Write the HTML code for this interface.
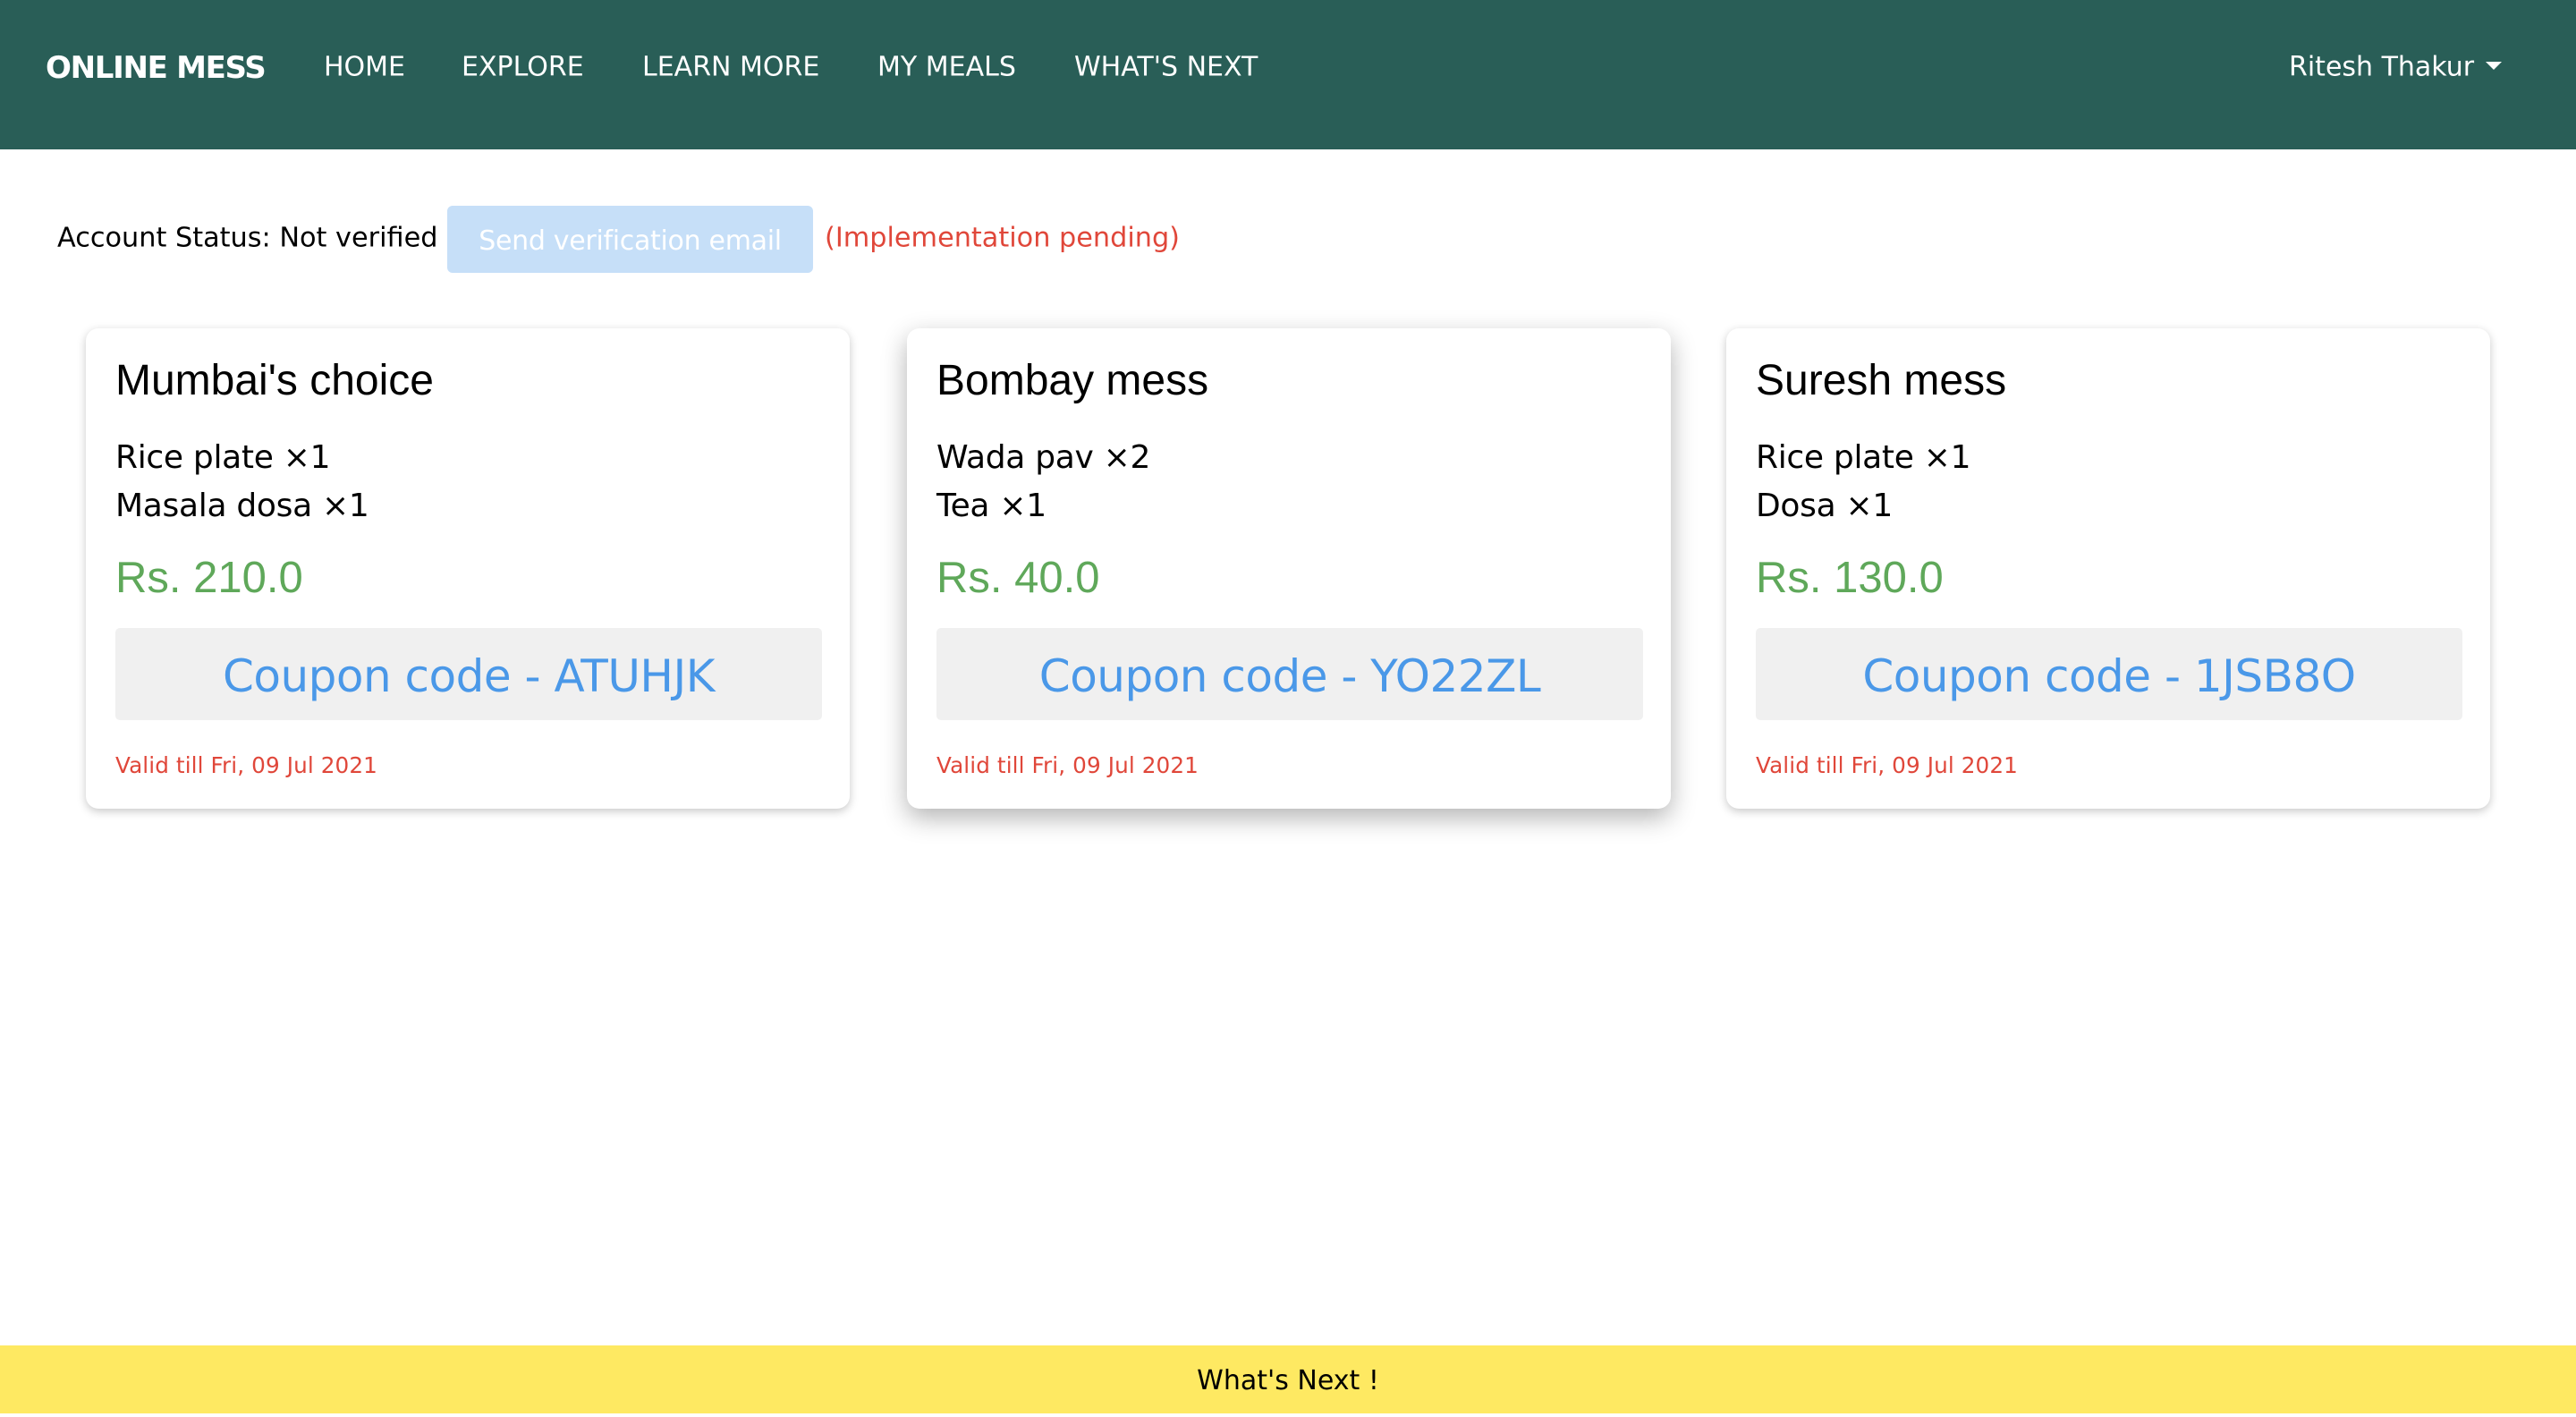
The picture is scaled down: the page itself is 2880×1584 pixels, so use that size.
<!DOCTYPE html>
<html><head><meta charset="utf-8"><style>
*{margin:0;padding:0;box-sizing:border-box}
body{width:2880px;height:1580px;position:relative;background:#fff;font-family:"DejaVu Sans",Verdana,sans-serif;overflow:hidden}
.nav{position:absolute;left:0;top:0;width:2880px;height:167px;background:#295e57;color:#fff}
.nav span{position:absolute;top:75px;transform:translateY(-50%);font-size:30px;white-space:nowrap;letter-spacing:0}
.brand{font-weight:bold;font-size:34px!important;letter-spacing:-1.3px!important;top:76px!important}
.abs{position:absolute;white-space:nowrap}
.card{position:absolute;top:367px;width:854px;height:537px;background:#fff;border-radius:14px;box-shadow:0 3px 10px rgba(0,0,0,0.22)}
.card.mid{box-shadow:0 10px 28px rgba(0,0,0,0.3)}
.card .t{position:absolute;left:33px;top:31px;font-family:"Liberation Sans",Arial,sans-serif;font-size:48px;color:#000}
.card .i{position:absolute;left:33px;font-size:36px;color:#000;letter-spacing:-0.3px}
.card .p{position:absolute;left:33px;top:251px;font-family:"Liberation Sans",Arial,sans-serif;font-size:49px;color:#5fa85a}
.card .c{position:absolute;left:33px;top:335px;width:790px;height:103px;background:#f0f0f0;border-radius:5px;color:#4a98e8;font-size:50px;text-align:center;line-height:108px;letter-spacing:-0.5px}
.card .v{position:absolute;left:33px;top:474px;font-size:24.7px;color:#e0473a;letter-spacing:0.1px}
</style></head><body>
<div class="nav">
<span class="brand" style="left:51px">ONLINE MESS</span>
<span style="left:362px">HOME</span>
<span style="left:516px">EXPLORE</span>
<span style="left:718px">LEARN MORE</span>
<span style="left:981px">MY MEALS</span>
<span style="left:1201px">WHAT'S NEXT</span>
<span style="left:2559px">Ritesh Thakur</span>
<div style="position:absolute;left:2779px;top:69px;width:0;height:0;border-left:9px solid transparent;border-right:9px solid transparent;border-top:9px solid #fff"></div>
</div>
<div class="abs" style="left:64px;top:266px;transform:translateY(-50%);font-size:30.3px;letter-spacing:0">Account Status: Not verified</div>
<div class="abs" style="left:500px;top:230px;width:409px;height:75px;background:#c6dff8;border-radius:6px;color:#fff;font-size:30px;text-align:center;line-height:80px;letter-spacing:-0.3px">Send verification email</div>
<div class="abs" style="left:922px;top:266px;transform:translateY(-50%);font-size:30.3px;color:#e0473a;letter-spacing:0">(Implementation pending)</div>

<div class="card" style="left:96px">
<div class="t">Mumbai's choice</div>
<div class="i" style="top:124px">Rice plate ×1</div>
<div class="i" style="top:178px">Masala dosa ×1</div>
<div class="p">Rs. 210.0</div>
<div class="c">Coupon code - ATUHJK</div>
<div class="v">Valid till Fri, 09 Jul 2021</div>
</div>
<div class="card mid" style="left:1014px">
<div class="t">Bombay mess</div>
<div class="i" style="top:124px">Wada pav ×2</div>
<div class="i" style="top:178px">Tea ×1</div>
<div class="p">Rs. 40.0</div>
<div class="c">Coupon code - YO22ZL</div>
<div class="v">Valid till Fri, 09 Jul 2021</div>
</div>
<div class="card" style="left:1930px">
<div class="t">Suresh mess</div>
<div class="i" style="top:124px">Rice plate ×1</div>
<div class="i" style="top:178px">Dosa ×1</div>
<div class="p">Rs. 130.0</div>
<div class="c">Coupon code - 1JSB8O</div>
<div class="v">Valid till Fri, 09 Jul 2021</div>
</div>

<div class="abs" style="left:0;top:1504px;width:2880px;height:76px;background:#fee962;text-align:center;line-height:80px;font-size:30px;color:#000;letter-spacing:0">What's Next !</div>
</body></html>
